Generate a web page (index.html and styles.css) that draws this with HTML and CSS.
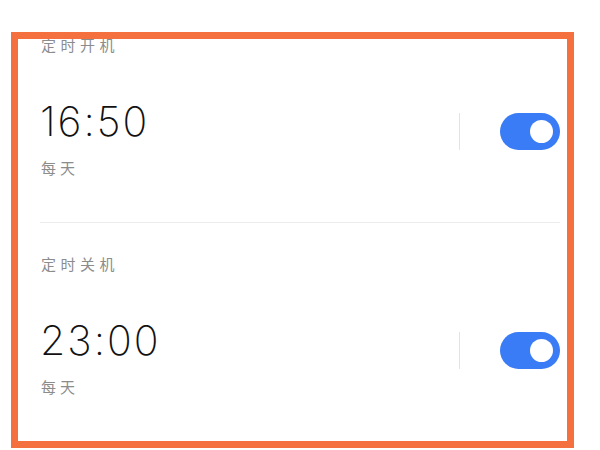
FILE: index.html
```html
<!DOCTYPE html>
<html lang="zh">
<head>
<meta charset="utf-8">
<link rel="stylesheet" href="styles.css">
</head>
<body>
<div class="card">
  <div class="list">
    <section class="item">
      <div class="label">定时开机</div>
      <div class="row">
        <div class="info">
          <div class="time">16:50</div>
          <div class="repeat">每天</div>
        </div>
        <div class="ctrl">
          <span class="sep"></span>
          <span class="toggle on"><span class="knob"></span></span>
        </div>
      </div>
    </section>
    <section class="item">
      <div class="label">定时关机</div>
      <div class="row">
        <div class="info">
          <div class="time">23:00</div>
          <div class="repeat">每天</div>
        </div>
        <div class="ctrl">
          <span class="sep"></span>
          <span class="toggle on"><span class="knob"></span></span>
        </div>
      </div>
    </section>
  </div>
</div>
</body>
</html>
```
FILE: styles.css
```css
html, body {
  margin: 0;
  padding: 0;
  background: #ffffff;
}
body {
  padding: 32px 0 0 11px;
  font-family: "Noto Sans CJK SC", "Noto Sans", sans-serif;
}
.card {
  box-sizing: border-box;
  width: 563px;
  height: 416px;
  border: 7px solid #f4703f;
  background: #ffffff;
  overflow: hidden;
}
.list {
  margin-top: -4px;
  padding: 0 7px 0 22px;
}
.item {
  padding: 31px 0 44px;
  border-bottom: 1px solid #ececec;
}
.item:first-child {
  padding-top: 0;
}
.item:last-child {
  border-bottom: none;
}
.label {
  font-size: 15px;
  line-height: 20px;
  color: #8c8c8c;
  letter-spacing: 4.5px;
  padding-left: 1px;
}
.row {
  display: flex;
  justify-content: space-between;
  align-items: flex-start;
  margin-top: 45px;
}
.time {
  font-family: "Inter", "DejaVu Sans", sans-serif;
  font-weight: 200;
  font-size: 41px;
  line-height: 42px;
  letter-spacing: 2px;
  color: #111111;
}
.repeat {
  margin-top: 16px;
  font-size: 15px;
  line-height: 20px;
  color: #8c8c8c;
  letter-spacing: 4px;
  padding-left: 1px;
}
.ctrl {
  display: flex;
  align-items: center;
  gap: 40px;
  margin-top: 13px;
}
.sep {
  width: 1px;
  height: 37px;
  background: #e3e3e3;
}
.toggle {
  position: relative;
  display: block;
  width: 60px;
  height: 37px;
  border-radius: 19px;
  background: #3a7cf5;
}
.knob {
  position: absolute;
  right: 7px;
  top: 7px;
  width: 23px;
  height: 23px;
  border-radius: 50%;
  background: #ffffff;
}
```
